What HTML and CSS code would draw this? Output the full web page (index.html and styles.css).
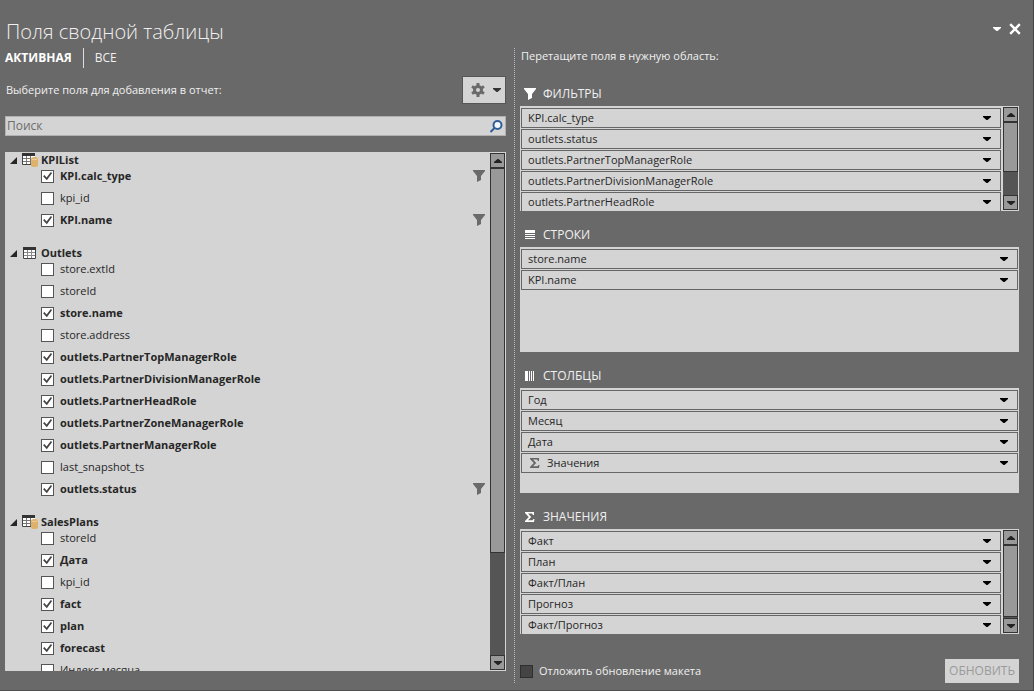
FILE: index.html
```
<!DOCTYPE html>
<html lang="ru">
<head>
    <meta charset="UTF-8">
    <meta name="viewport" content="width=device-width, initial-scale=1.0">
    <title>Поля сводной таблицы</title>
    <link rel="stylesheet" href="styles.css">
</head>
<body>
    <!-- Shared icons -->
    <svg class="sprite" aria-hidden="true">
        <symbol id="caret" viewBox="0 0 8 4"><path d="M0 0h8v1L4.500 4h-1L0 1z"/></symbol>
        <symbol id="caret-up" viewBox="0 0 8 4"><path d="M0 4h8V3L4.500 0h-1L0 3z"/></symbol>
        <symbol id="funnel" viewBox="0 0 12 12"><path d="M0 0h12v1L8 6v4l-4 2V6L0 1z"/></symbol>
        <symbol id="sigma" viewBox="0 0 10 10"><path d="M0 0h9v3H8L7 1.500H3L6.200 5 3 8.300h4.500L8.500 7h1L9 10H0V9l3.800-4L0 1z"/></symbol>
        <symbol id="expander" viewBox="0 0 7 7"><path d="M7 0v7H0z"/></symbol>
        <symbol id="table" viewBox="0 0 16 14">
            <path d="M1 2h13v11H1z" fill="#fff"/>
            <path d="M1 6.500h13M1 9.500h13M5.500 3v10M9.500 3v10" stroke="#888" fill="none"/>
            <path d="M1.500 2.500h12v10h-12z" stroke="#444" fill="none"/>
            <path d="M1 1h13v3H1z" fill="#333"/>
        </symbol>
        <symbol id="table-db" viewBox="0 0 16 14">
            <path d="M0 1h13v10H0z" fill="#fff"/>
            <path d="M0 5.500h12M0 8.500h12M4.500 2v9M8.500 2v9" stroke="#777" fill="none"/>
            <path d="M.5 1v10.500H9" stroke="#444" fill="none"/>
            <path d="M0 0h13v3H0z" fill="#333"/>
            <path d="M9 5.500c0-2 7-2 7 0v7c0 2-7 2-7 0z" fill="#dfb26c"/>
            <path d="M9.500 5.800c1 1 5 1 6 0" stroke="#f0d3a2" fill="none"/>
        </symbol>
    </svg>

    <main class="pane">
        <header class="pane-header">
            <h1>Поля сводной таблицы</h1>
            <button class="icon-btn" aria-label="Параметры области"><svg class="caret"><use href="#caret"/></svg></button>
            <button class="icon-btn" aria-label="Закрыть"><svg class="close" viewBox="0 0 10 10"><path d="M1 1l8 8M9 1L1 9"/></svg></button>
        </header>

        <div class="columns">
            <section class="left">
                <nav class="tabs">
                    <a href="#active" class="active">АКТИВНАЯ</a>
                    <a href="#all">ВСЕ</a>
                </nav>
                <div class="tools">
                    <p>Выберите поля для добавления в отчет:</p>
                    <button class="settings" aria-label="Сервис">
                        <svg class="gear" viewBox="0 0 14 14">
                            <path d="M7 0v3M7 11v3M1 3.500l2.600 1.500M10.400 9l2.600 1.500M1 10.500L3.600 9M10.400 5L13 3.500" stroke-width="3"/>
                            <circle cx="7" cy="7" r="3.500" stroke-width="3"/>
                        </svg>
                        <svg class="caret"><use href="#caret"/></svg>
                    </button>
                </div>
                <div class="search">
                    <input type="text" placeholder="Поиск" aria-label="Поиск">
                    <svg viewBox="0 0 14 13"><circle cx="8.500" cy="5" r="4"/><path d="M5.500 8L1.500 12"/></svg>
                </div>

                <div class="list-box">
                    <div class="field-list">
                        <div class="group">
                            <h2><svg class="expander"><use href="#expander"/></svg><svg class="table-icon"><use href="#table-db"/></svg>KPIList</h2>
                            <label><input type="checkbox" checked><span>KPI.calc_type</span><svg class="funnel"><use href="#funnel"/></svg></label>
                            <label><input type="checkbox"><span>kpi_id</span></label>
                            <label><input type="checkbox" checked><span>KPI.name</span><svg class="funnel"><use href="#funnel"/></svg></label>
                        </div>
                        <div class="group">
                            <h2><svg class="expander"><use href="#expander"/></svg><svg class="table-icon"><use href="#table"/></svg>Outlets</h2>
                            <label><input type="checkbox"><span>store.extId</span></label>
                            <label><input type="checkbox"><span>storeId</span></label>
                            <label><input type="checkbox" checked><span>store.name</span></label>
                            <label><input type="checkbox"><span>store.address</span></label>
                            <label><input type="checkbox" checked><span>outlets.PartnerTopManagerRole</span></label>
                            <label><input type="checkbox" checked><span>outlets.PartnerDivisionManagerRole</span></label>
                            <label><input type="checkbox" checked><span>outlets.PartnerHeadRole</span></label>
                            <label><input type="checkbox" checked><span>outlets.PartnerZoneManagerRole</span></label>
                            <label><input type="checkbox" checked><span>outlets.PartnerManagerRole</span></label>
                            <label><input type="checkbox"><span>last_snapshot_ts</span></label>
                            <label><input type="checkbox" checked><span>outlets.status</span><svg class="funnel"><use href="#funnel"/></svg></label>
                        </div>
                        <div class="group">
                            <h2><svg class="expander"><use href="#expander"/></svg><svg class="table-icon"><use href="#table-db"/></svg>SalesPlans</h2>
                            <label><input type="checkbox"><span>storeId</span></label>
                            <label><input type="checkbox" checked><span>Дата</span></label>
                            <label><input type="checkbox"><span>kpi_id</span></label>
                            <label><input type="checkbox" checked><span>fact</span></label>
                            <label><input type="checkbox" checked><span>plan</span></label>
                            <label><input type="checkbox" checked><span>forecast</span></label>
                            <label><input type="checkbox"><span>Индекс месяца</span></label>
                        </div>
                    </div>
                    <div class="scrollbar">
                        <button aria-label="Вверх"><svg class="caret"><use href="#caret-up"/></svg></button>
                        <div class="track"><div class="thumb thumb-list"></div></div>
                        <button aria-label="Вниз"><svg class="caret"><use href="#caret"/></svg></button>
                    </div>
                </div>
            </section>

            <section class="right">
                <p class="hint">Перетащите поля в нужную область:</p>

                <div class="area">
                    <h3><svg class="area-icon" viewBox="0 0 12 12"><use href="#funnel"/></svg>ФИЛЬТРЫ</h3>
                    <div class="drop">
                        <div class="items">
                            <button>KPI.calc_type<svg class="caret"><use href="#caret"/></svg></button>
                            <button>outlets.status<svg class="caret"><use href="#caret"/></svg></button>
                            <button>outlets.PartnerTopManagerRole<svg class="caret"><use href="#caret"/></svg></button>
                            <button>outlets.PartnerDivisionManagerRole<svg class="caret"><use href="#caret"/></svg></button>
                            <button>outlets.PartnerHeadRole<svg class="caret"><use href="#caret"/></svg></button>
                        </div>
                        <div class="scrollbar">
                            <button aria-label="Вверх"><svg class="caret"><use href="#caret-up"/></svg></button>
                            <div class="track"><div class="thumb thumb-filters"></div></div>
                            <button aria-label="Вниз"><svg class="caret"><use href="#caret"/></svg></button>
                        </div>
                    </div>
                </div>

                <div class="area">
                    <h3><svg class="area-icon" viewBox="0 0 12 12"><path d="M1 1h10v3H1zM1 5h10v1H1zM1 7h10v1H1zM1 9h10v1H1z"/></svg>СТРОКИ</h3>
                    <div class="drop">
                        <div class="items">
                            <button>store.name<svg class="caret"><use href="#caret"/></svg></button>
                            <button>KPI.name<svg class="caret"><use href="#caret"/></svg></button>
                        </div>
                    </div>
                </div>

                <div class="area">
                    <h3><svg class="area-icon" viewBox="0 0 12 12"><path d="M1 1h3v10H1zM5 1h1v10H5zM7 1h1v10H7zM9 1h1v10H9z"/></svg>СТОЛБЦЫ</h3>
                    <div class="drop">
                        <div class="items">
                            <button>Год<svg class="caret"><use href="#caret"/></svg></button>
                            <button>Месяц<svg class="caret"><use href="#caret"/></svg></button>
                            <button>Дата<svg class="caret"><use href="#caret"/></svg></button>
                            <button><svg class="sigma"><use href="#sigma"/></svg>Значения<svg class="caret"><use href="#caret"/></svg></button>
                        </div>
                    </div>
                </div>

                <div class="area">
                    <h3><svg class="area-icon" viewBox="-1 -1 12 12"><use href="#sigma" width="10" height="10"/></svg>ЗНАЧЕНИЯ</h3>
                    <div class="drop">
                        <div class="items">
                            <button>Факт<svg class="caret"><use href="#caret"/></svg></button>
                            <button>План<svg class="caret"><use href="#caret"/></svg></button>
                            <button>Факт/План<svg class="caret"><use href="#caret"/></svg></button>
                            <button>Прогноз<svg class="caret"><use href="#caret"/></svg></button>
                            <button>Факт/Прогноз<svg class="caret"><use href="#caret"/></svg></button>
                        </div>
                        <div class="scrollbar">
                            <button aria-label="Вверх"><svg class="caret"><use href="#caret-up"/></svg></button>
                            <div class="track"><div class="thumb thumb-values"></div></div>
                            <button aria-label="Вниз"><svg class="caret"><use href="#caret"/></svg></button>
                        </div>
                    </div>
                </div>

                <footer>
                    <label class="defer"><input type="checkbox">Отложить обновление макета</label>
                    <button class="update" disabled>ОБНОВИТЬ</button>
                </footer>
            </section>
        </div>
    </main>
</body>
</html>
```
FILE: styles.css
```
* {
    box-sizing: border-box;
}

body {
    margin: 0;
    background-color: #696969;
    color: #f0f0f0;
    font-family: "Open Sans", "Noto Sans", sans-serif;
    font-size: 11px;
    line-height: 16px;
}

h1, h2, h3, p {
    margin: 0;
    font-weight: normal;
}

button {
    margin: 0;
    padding: 0;
    border: none;
    background: none;
    color: inherit;
    font: inherit;
    cursor: pointer;
}

svg {
    flex: none;
    fill: currentColor;
}

.sprite {
    display: none;
}

.caret {
    width: 8px;
    height: 4px;
}

.pane {
    display: flex;
    flex-direction: column;
    height: 100vh;
    padding: 16px 14px 7px 5px;
    border-right: 1px solid #444;
    border-bottom: 1px solid #505050;
}

/* Header */
.pane-header {
    display: flex;
    align-items: center;
    height: 32px;
    gap: 8px;
    margin-right: -2px;
}

h1 {
    flex: 1;
    padding-left: 1px;
    font-size: 20px;
    font-weight: 300;
    line-height: 32px;
}

.icon-btn {
    display: flex;
    padding-bottom: 6px;
    color: #fff;
}

.close {
    width: 12px;
    height: 12px;
    stroke: #fff;
    stroke-width: 2;
}

/* Two columns with a dotted line between them */
.columns {
    display: flex;
    flex: 1;
    min-height: 0;
}

.left, .right {
    display: flex;
    flex-direction: column;
    min-width: 0;
}

.left {
    flex: 0 0 50.2%;
    padding: 0 8px 12px 0;
}

.right {
    flex: 1;
    padding-left: 5px;
    border-left: 1px dotted #bbb;
}

.tabs {
    display: flex;
    height: 20px;
    font-size: 12px;
    line-height: 20px;
}

.tabs a {
    padding-left: 11px;
    color: #f0f0f0;
    text-decoration: none;
}

.tabs .active {
    padding: 0 11px 0 0;
    border-right: 1px solid #ddd;
    color: #fff;
    font-weight: bold;
}

.tools {
    display: flex;
    align-items: center;
    justify-content: space-between;
    margin-top: 8px;
    padding-left: 1px;
}

.settings {
    display: flex;
    align-items: center;
    gap: 8px;
    height: 28px;
    padding: 0 4px 0 8px;
    border: 1px solid #555;
    background-color: #d4d4d4;
    color: #333;
}

.gear {
    width: 14px;
    height: 14px;
    fill: none;
    stroke: #6a6a6a;
}

.search {
    display: flex;
    align-items: center;
    height: 20px;
    margin-top: 12px;
    padding-right: 2px;
    border: 1px solid #b0b0b0;
    background-color: #d4d4d4;
}

.search input {
    flex: 1;
    min-width: 0;
    padding: 0 1px;
    border: none;
    outline: none;
    background: none;
    color: #262626;
    font: inherit;
    font-size: 12px;
}

.search input::placeholder {
    color: #6c6c6c;
}

.search svg {
    width: 14px;
    height: 13px;
    fill: #f4f8fc;
    stroke: #2f5d98;
    stroke-width: 2;
}

/* Field list */
.list-box {
    display: flex;
    flex: 1;
    min-height: 0;
    margin-top: 16px;
    padding-right: 1px;
    background-color: #d4d4d4;
    color: #262626;
}

.field-list {
    flex: 1;
    overflow: hidden;
    padding: 0 5px;
}

.group {
    margin-bottom: 14px;
}

/* The first row tucks in close under the table name */
.group h2 {
    display: flex;
    align-items: center;
    height: 16px;
    margin-bottom: -3px;
    font-size: 11px;
    font-weight: bold;
}

.expander {
    width: 7px;
    height: 7px;
    margin-right: 5px;
}

.table-icon {
    width: 16px;
    height: 14px;
    margin-right: 3px;
}

.group label {
    display: flex;
    align-items: center;
    gap: 6px;
    height: 22px;
    padding-left: 31px;
}

.group label span {
    flex: 1;
}

.group input:checked + span {
    font-weight: bold;
}

.funnel {
    width: 12px;
    height: 12px;
    color: #6a6a6a;
}

input[type="checkbox"] {
    appearance: none;
    width: 13px;
    height: 13px;
    margin: 0;
    border: 1px solid #555;
    background-color: #fff;
}

input[type="checkbox"]:checked::before {
    content: "";
    display: block;
    width: 11px;
    height: 11px;
    background-color: #444;
    clip-path: polygon(10% 52%, 22% 42%, 42% 64%, 80% 14%, 92% 22%, 44% 88%);
}

/* Scrollbars */
.scrollbar {
    display: flex;
    flex-direction: column;
    width: 15px;
    margin: 1px 0;
    background-color: #555;
}

.scrollbar button {
    display: flex;
    align-items: center;
    justify-content: center;
    height: 15px;
    border: 1px solid #333;
    background-color: #999;
    color: #222;
}

.track {
    flex: 1;
}

.thumb {
    border: 1px solid #333;
    background-color: #999;
}

.thumb-list {
    height: 79%;
}

.thumb-filters {
    height: 69%;
}

.thumb-values {
    height: 98%;
}

/* Drop areas */
.hint {
    margin-bottom: 6px;
    padding-left: 1px;
}

.area {
    display: flex;
    flex: 1;
    flex-direction: column;
    min-height: 0;
}

.area h3 {
    display: flex;
    align-items: center;
    gap: 7px;
    height: 36px;
    padding: 12px 0 0 4px;
    font-size: 12px;
}

.area-icon {
    width: 12px;
    height: 12px;
    color: #fff;
}

.drop {
    display: flex;
    flex: 1;
    min-height: 0;
    gap: 2px;
    padding: 0 1px;
    background-color: #d4d4d4;
    color: #262626;
}

.items {
    display: flex;
    flex: 1;
    flex-direction: column;
    gap: 1px;
    overflow: hidden;
    padding-top: 2px;
}

.items button {
    display: flex;
    flex: none;
    align-items: center;
    height: 20px;
    padding: 0 9px 0 6px;
    border: 1px solid #666;
    text-align: left;
}

.items .caret {
    margin-left: auto;
    color: #000;
}

.sigma {
    width: 10px;
    height: 10px;
    margin: 0 7px 0 2px;
    color: #666;
}

/* Footer */
footer {
    display: flex;
    align-items: flex-end;
    justify-content: space-between;
    height: 49px;
}

.defer {
    display: flex;
    align-items: center;
    gap: 6px;
    height: 24px;
}

.defer input[type="checkbox"] {
    border-color: #2e2e2e;
    background-color: #444;
}

.update {
    height: 24px;
    padding: 0 4px;
    background-color: #d4d4d4;
    color: #9a9a9a;
    font-size: 12px;
}
```
